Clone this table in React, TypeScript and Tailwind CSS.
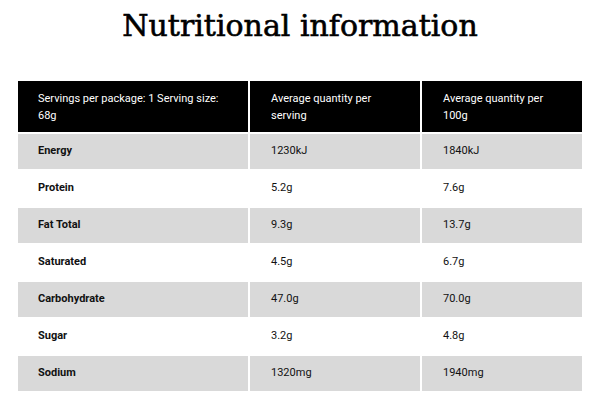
import React from 'react'

const rows = [
    ['Energy', '1230kJ', '1840kJ'],
    ['Protein', '5.2g', '7.6g'],
    ['Fat Total', '9.3g', '13.7g'],
    ['Saturated', '4.5g', '6.7g'],
    ['Carbohydrate', '47.0g', '70.0g'],
    ['Sugar', '3.2g', '4.8g'],
    ['Sodium', '1320mg', '1940mg'],
]

const App: React.FC = () => {
    return (
        <div className="w-[600px] h-[400px] bg-white overflow-hidden" style={{ fontFamily: 'Roboto, sans-serif' }}>
            <h1 className="text-center text-[30px] leading-[48px] pt-[2px] text-black [-webkit-text-stroke:0.6px_black]" style={{ fontFamily: "'DejaVu Serif', serif" }}>
                Nutritional information
            </h1>
            <table className="ml-[16px] mt-[29px] w-[568px] border-collapse text-[11px] text-[#111]">
                <thead>
                    <tr className="bg-black text-white h-[53px]">
                        <th className="w-[232px] border-2 border-white font-normal text-left align-middle pl-[20px] pr-[20px] leading-[17px]">
                            Servings per package: 1 Serving size: 68g
                        </th>
                        <th className="w-[172px] border-2 border-white font-normal text-left pl-[21px] pr-[20px] leading-[17px]">
                            Average quantity per serving
                        </th>
                        <th className="border-2 border-white font-normal text-left pl-[21px] pr-[20px] leading-[17px]">
                            Average quantity per 100g
                        </th>
                    </tr>
                </thead>
                <tbody>
                    {rows.map((r, i) => (
                        <tr key={r[0]} className={i % 2 === 0 ? 'bg-[#d9d9d9] h-[37px]' : 'bg-white h-[37px]'}>
                            <td className="border-2 border-white pl-[20px] font-bold">{r[0]}</td>
                            <td className="border-2 border-white pl-[21px]">{r[1]}</td>
                            <td className="border-2 border-white pl-[21px]">{r[2]}</td>
                        </tr>
                    ))}
                </tbody>
            </table>
        </div>
    )
}

export default App
